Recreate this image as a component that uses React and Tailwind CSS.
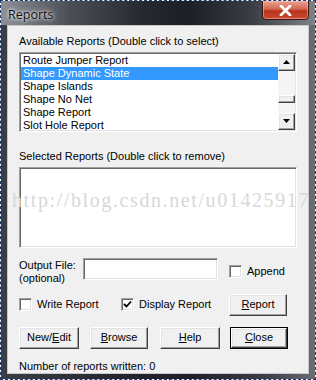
import React from 'react';

const sunken =
  'border border-t-[#a0a0a0] border-l-[#a0a0a0] border-b-white border-r-white shadow-[inset_1px_1px_0_#696969,inset_-1px_-1px_0_#e3e3e3]';
const raised =
  'border border-t-white border-l-white border-b-[#404040] border-r-[#404040] shadow-[inset_-1px_-1px_0_#a0a0a0,inset_1px_1px_0_#e3e3e3] bg-[#f0f0f0]';

function Button({ children, className = '', isDefault = false }) {
  const btn = (
    <div className={`h-full w-full flex items-center justify-center ${raised}`}>
      {children}
    </div>
  );
  return (
    <div className={`h-[22px] ${className} ${isDefault ? 'border border-black' : ''}`}>
      {btn}
    </div>
  );
}

function Checkbox({ checked = false }) {
  return (
    <div className={`w-[13px] h-[13px] bg-white flex items-center justify-center ${sunken}`}>
      {checked && (
        <svg width="9" height="9" viewBox="0 0 9 9">
          <path d="M1 4 L3.5 6.5 L8 1.5" stroke="#000" strokeWidth="1.8" fill="none" />
        </svg>
      )}
    </div>
  );
}

function ScrollArrow({ down = false }) {
  return (
    <div className={`w-[17px] h-[17px] flex items-center justify-center ${raised}`}>
      <svg width="7" height="4" viewBox="0 0 7 4">
        <path d={down ? 'M0 0 H7 L3.5 4 Z' : 'M0 4 H7 L3.5 0 Z'} fill="#000" />
      </svg>
    </div>
  );
}

const reports = [
  'Route Jumper Report',
  'Shape Dynamic State',
  'Shape Islands',
  'Shape No Net',
  'Shape Report',
  'Slot Hole Report',
];

export default function App() {
  return (
    <div
      className="w-[316px] h-[380px] overflow-hidden relative border border-dashed border-[#1d3b6e] bg-white"
      style={{ fontFamily: '"Liberation Sans", Arial, sans-serif' }}
    >
      {/* window frame */}
      <div className="h-full w-full flex flex-col bg-[linear-gradient(90deg,#3a3e45_0%,#22252c_40%,#1d2027_60%,#3b3f46_85%,#6b6e73_100%)]">
        {/* title bar */}
        <div className="h-[28px] flex items-start relative bg-[linear-gradient(90deg,#8c9096_0%,#4a4e55_22%,#262930_45%,#1c1f26_60%,#3a3d44_80%,#7f8287_100%)]">
          <span
            className="mt-[5px] ml-[7px] text-[12.5px] text-[#111] [text-shadow:0_0_6px_#fff,0_0_3px_#fff]"
            style={{ fontFamily: '"Open Sans", "Noto Sans", sans-serif' }}
          >
            Reports
          </span>
          <div className="absolute right-[6px] top-[-1px] w-[47px] h-[20px] rounded-b-[4px] border border-[#3b1410] bg-[linear-gradient(180deg,#e9a598_0%,#d4664f_45%,#b8321c_55%,#c84a30_100%)] shadow-[inset_0_0_0_1px_rgba(255,200,190,0.5)] flex items-center justify-center">
            <svg width="13" height="11" viewBox="0 0 13 11">
              <path d="M2 1 L11 10 M11 1 L2 10" stroke="#fff" strokeWidth="2.8" strokeLinecap="round" />
            </svg>
          </div>
        </div>

        {/* client area */}
        <div className="flex-1 mx-[6px] mb-[7px] border border-[#c8c8c8] bg-[#f0f0f0] text-[11px] leading-[13px] text-black px-[11px] flex flex-col relative">
          <div className="mt-[9px] h-[13px]">Available Reports (Double click to select)</div>

          {/* available list */}
          <div className={`mt-[4px] h-[80px] bg-white flex ${sunken}`}>
            <div className="flex-1 pt-px pl-px flex flex-col overflow-hidden">
              {reports.map((r, i) => (
                <div
                  key={r}
                  className={`h-[13px] pl-[2px] shrink-0 ${i === 1 ? 'bg-[#3399ff] text-white' : ''}`}
                >
                  {r}
                </div>
              ))}
            </div>
            <div className="w-[17px] flex flex-col bg-[#f4f4f4] mt-px mr-px mb-px">
              <ScrollArrow />
              <div className="flex-1 flex flex-col pt-[24px]">
                <div className={`h-[8px] ${raised}`} />
              </div>
              <ScrollArrow down />
            </div>
          </div>

          <div className="mt-[18px] h-[13px]">Selected Reports (Double click to remove)</div>
          <div className={`mt-[4px] h-[81px] bg-white ${sunken}`} />

          {/* output file */}
          <div className="mt-[10px] flex items-start">
            <div className="w-[64px] pt-[1px]">
              <div>Output File:</div>
              <div>(optional)</div>
            </div>
            <div className={`w-[135px] h-[22px] bg-white ${sunken}`} />
            <div className="ml-[11px] mt-[7px] flex items-center gap-[5px]">
              <Checkbox />
              <span>Append</span>
            </div>
          </div>

          <div className="mt-[9px] flex items-center">
            <div className="flex items-center gap-[5px] w-[102px]">
              <Checkbox />
              <span>Write Report</span>
            </div>
            <div className="flex items-center gap-[5px] w-[108px]">
              <Checkbox checked />
              <span>Display Report</span>
            </div>
            <Button className="w-[58px]">
              <span><u>R</u>eport</span>
            </Button>
          </div>

          <div className="mt-[11px] flex items-center">
            <Button className="w-[60px]">
              <span>New/<u>E</u>dit</span>
            </Button>
            <Button className="w-[58px] ml-[11px]">
              <span><u>B</u>rowse</span>
            </Button>
            <Button className="w-[60px] ml-[12px]">
              <span><u>H</u>elp</span>
            </Button>
            <Button className="w-[58px] ml-[10px]" isDefault>
              <span><u>C</u>lose</span>
            </Button>
          </div>

          <div className="mt-[11px]">Number of reports written: 0</div>

          {/* csdn watermark */}
          <div
            className="absolute left-[4px] top-[162px] text-[20px] leading-[24px] tracking-[1.6px] text-[#d8d8d8] whitespace-nowrap pointer-events-none"
            style={{ fontFamily: '"Liberation Serif", "Times New Roman", serif' }}
          >
            http://blog.csdn.net/u01425917
          </div>
        </div>
      </div>
    </div>
  );
}
